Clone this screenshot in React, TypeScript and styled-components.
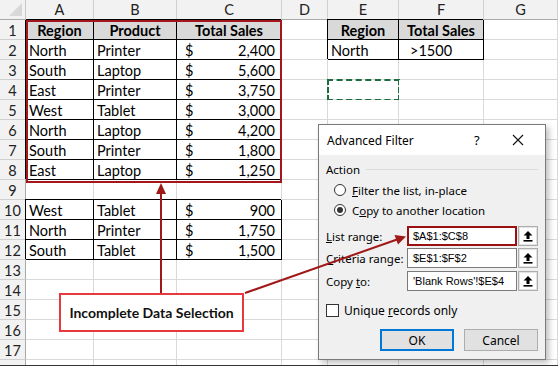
import React from "react";
import styled, { createGlobalStyle } from "styled-components";

const GlobalStyle = createGlobalStyle`
  html, body { margin: 0; padding: 0; background: #fff; }
  body { font-family: "Lato", "Open Sans", sans-serif; }
`;

// Column widths: row header, A..G
const COLS = [26, 68, 83, 105, 46, 71, 85, 74];
const LETTERS = ["A", "B", "C", "D", "E", "F", "G"];

type CellData = {
  text?: string;
  money?: string;
  bold?: boolean;
  head?: boolean;
  boxed?: boolean;
  center?: boolean;
  indent?: number;
  marching?: boolean;
};

const h = (text: string): CellData => ({ text, bold: true, head: true, boxed: true, center: true });
const t = (text: string): CellData => ({ text, boxed: true });
const m = (money: string): CellData => ({ money, boxed: true });

const DATA: CellData[][] = [
  [h("Region"), h("Product"), h("Total Sales"), {}, h("Region"), h("Total Sales"), {}],
  [t("North"), t("Printer"), m("2,400"), {}, t("North"), { text: ">1500", boxed: true, indent: 8 }, {}],
  [t("South"), t("Laptop"), m("5,600"), {}, {}, {}, {}],
  [t("East"), t("Printer"), m("3,750"), {}, { marching: true }, {}, {}],
  [t("West"), t("Tablet"), m("3,000"), {}, {}, {}, {}],
  [t("North"), t("Laptop"), m("4,200"), {}, {}, {}, {}],
  [t("South"), t("Printer"), m("1,800"), {}, {}, {}, {}],
  [t("East"), t("Laptop"), m("1,250"), {}, {}, {}, {}],
  [{}, {}, {}, {}, {}, {}, {}],
  [t("West"), t("Tablet"), m("900"), {}, {}, {}, {}],
  [t("North"), t("Printer"), m("1,750"), {}, {}, {}, {}],
  [t("South"), t("Tablet"), m("1,500"), {}, {}, {}, {}],
];

const NUMBERED_ROWS = 17;

const Page = styled.div`
  position: relative;
  width: 558px;
  height: 366px;
  overflow: hidden;
  background: #fff;
  box-sizing: border-box;
  border-bottom: 1px solid #333;
`;

const Sheet = styled.div`
  display: grid;
  grid-template-columns: ${COLS.map((c) => `${c}px`).join(" ")};
  grid-auto-rows: 20px;
  font-size: 14.5px;
  color: #000;
`;

const Corner = styled.div`
  position: relative;
  background: #f2f2f2;
  border-right: 1px solid #c6c6c6;
  border-bottom: 1px solid #a9a9a9;
  &::after {
    content: "";
    position: absolute;
    right: 3px;
    bottom: 3px;
    width: 0;
    height: 0;
    border-left: 13px solid transparent;
    border-bottom: 13px solid #d8d8d8;
  }
`;

const ColHead = styled.div`
  display: flex;
  align-items: center;
  justify-content: center;
  background: #f2f2f2;
  color: #222;
  border-right: 1px solid #d0d0d0;
  border-bottom: 1px solid #a9a9a9;
`;

const RowHead = styled.div`
  display: flex;
  align-items: center;
  justify-content: center;
  padding-top: 1px;
  background: #f2f2f2;
  color: #222;
  border-right: 1px solid #a9a9a9;
  border-bottom: 1px solid #d0d0d0;
`;

const Cell = styled.div<{ $boxed?: boolean; $head?: boolean; $center?: boolean; $indent?: number; $marching?: boolean }>`
  display: flex;
  align-items: center;
  justify-content: ${(p) => (p.$center ? "center" : "flex-start")};
  padding: 1px 3px 0 ${(p) => 3 + (p.$indent || 0)}px;
  white-space: nowrap;
  overflow: hidden;
  background: ${(p) => (p.$head ? "#d9d9d9" : "#fff")};
  font-weight: ${(p) => (p.$head ? 700 : 400)};
  border-right: 1px solid ${(p) => (p.$boxed ? "#000" : "#d9d9d9")};
  border-bottom: 1px solid ${(p) => (p.$boxed ? "#000" : "#d9d9d9")};
  box-shadow: ${(p) => (p.$boxed ? "-1px -1px 0 #000" : "none")};
  outline: ${(p) => (p.$marching ? "2px dashed #1b6b3c" : "none")};
  outline-offset: -1px;
`;

const Money = styled.span`
  display: flex;
  justify-content: space-between;
  width: 100%;
  padding: 0 3px 0 5px;
`;

const Selection = styled.div`
  position: absolute;
  left: 26px;
  top: 20px;
  width: 256px;
  height: 163px;
  box-sizing: border-box;
  border: 2px solid #a5161c;
  pointer-events: none;
`;

const Callout = styled.div`
  position: absolute;
  left: 59px;
  top: 293px;
  width: 185px;
  height: 39px;
  box-sizing: border-box;
  border: 2px solid #e8393f;
  background: #fff;
  display: flex;
  align-items: center;
  justify-content: center;
  font-weight: 700;
  font-size: 14px;
  color: #111;
`;

const Dialog = styled.div`
  position: absolute;
  left: 318px;
  top: 124px;
  width: 228px;
  height: 236px;
  box-sizing: border-box;
  border: 1px solid #7a7a7a;
  background: #f0f0f0;
  box-shadow: 3px 3px 6px rgba(0, 0, 0, 0.25);
  font-family: "Noto Sans", "Open Sans", sans-serif;
  font-size: 11.5px;
  color: #000;
  display: flex;
  flex-direction: column;
`;

const TitleBar = styled.div`
  height: 30px;
  background: #fff;
  display: flex;
  align-items: center;
  padding-left: 8px;
  font-size: 12px;
`;

const TitleText = styled.span`
  flex: 1;
`;

const HelpMark = styled.span`
  width: 14px;
  margin-right: 24px;
  font-size: 13px;
`;

const CloseBtn = styled.span`
  width: 12px;
  height: 12px;
  margin-right: 21px;
  display: flex;
`;

const Body = styled.div`
  padding: 0 7px;
  display: flex;
  flex-direction: column;
`;

const GroupTitle = styled.div`
  margin-top: 7px;
  height: 14px;
  display: flex;
  align-items: center;
  gap: 6px;
  &::after {
    content: "";
    flex: 1;
    height: 1px;
    background: #dcdcdc;
    margin-top: 1px;
  }
`;

const OptionRow = styled.div<{ $top: number }>`
  margin-top: ${(p) => p.$top}px;
  margin-left: 8px;
  height: 16px;
  display: flex;
  align-items: center;
  gap: 6px;
`;

const Radio = styled.span<{ $on?: boolean }>`
  width: 12px;
  height: 12px;
  box-sizing: border-box;
  border-radius: 50%;
  border: 1px solid #333;
  background: #fff;
  display: flex;
  align-items: center;
  justify-content: center;
  &::after {
    content: "";
    width: 6px;
    height: 6px;
    border-radius: 50%;
    background: ${(p) => (p.$on ? "#333" : "transparent")};
  }
`;

const FieldRow = styled.div<{ $top: number }>`
  margin-top: ${(p) => p.$top}px;
  height: 20px;
  display: flex;
  align-items: center;
`;

const FieldLabel = styled.span`
  width: 81px;
`;

const FieldInput = styled.div<{ $hot?: boolean }>`
  width: 110px;
  height: 20px;
  box-sizing: border-box;
  border: ${(p) => (p.$hot ? "2px solid #9b1111" : "1px solid #7a7a7a")};
  background: #fff;
  display: flex;
  align-items: center;
  padding-left: ${(p) => (p.$hot ? 4 : 5)}px;
  font-family: "Liberation Sans", Arial, sans-serif;
  font-size: 11px;
  white-space: nowrap;
  overflow: hidden;
`;

const PickBtn = styled.div`
  width: 20px;
  height: 20px;
  margin-left: 1px;
  box-sizing: border-box;
  border: 1px solid #adadad;
  box-shadow: inset 0 0 0 1px #e3e3e3;
  background: #fff;
  display: flex;
  align-items: center;
  justify-content: center;
`;

const CheckRow = styled.div`
  margin-top: 12px;
  height: 14px;
  display: flex;
  align-items: center;
  gap: 5px;
  font-size: 12px;
`;

const CheckBox = styled.span`
  width: 13px;
  height: 13px;
  box-sizing: border-box;
  border: 1px solid #333;
  background: #fff;
`;

const ButtonRow = styled.div`
  margin-top: 12px;
  display: flex;
  justify-content: flex-end;
  gap: 10px;
`;

const Button = styled.div<{ $primary?: boolean }>`
  width: 74px;
  height: 22px;
  box-sizing: border-box;
  border: ${(p) => (p.$primary ? "2px solid #0078d7" : "1px solid #adadad")};
  background: #e1e1e1;
  display: flex;
  align-items: center;
  justify-content: center;
  font-size: 12px;
`;

const Arrows = styled.svg`
  position: absolute;
  left: 0;
  top: 0;
  pointer-events: none;
`;

const UpArrow = () => (
  <svg width="10" height="11" viewBox="0 0 10 11">
    <path d="M5 0 L9.5 4.5 L6.5 4.5 L6.5 8 L3.5 8 L3.5 4.5 L0.5 4.5 Z" fill="#000" />
    <rect x="0.5" y="9" width="9" height="1.6" fill="#000" />
  </svg>
);

const CloseIcon = () => (
  <svg width="12" height="12" viewBox="0 0 12 12">
    <path d="M1 1 L11 11 M11 1 L1 11" stroke="#111" strokeWidth="1.1" />
  </svg>
);

const renderCell = (c: CellData, key: string) => (
  <Cell key={key} $boxed={c.boxed} $head={c.head} $center={c.center} $indent={c.indent} $marching={c.marching}>
    {c.money ? (
      <Money>
        <span>$</span>
        <span>{c.money}</span>
      </Money>
    ) : (
      c.text
    )}
  </Cell>
);

export default function App() {
  const blank: CellData[] = [{}, {}, {}, {}, {}, {}, {}];
  const rows = Array.from({ length: NUMBERED_ROWS + 1 }, (_, i) => DATA[i] || blank);

  return (
    <>
      <GlobalStyle />
      <Page>
        <Sheet>
          <Corner />
          {LETTERS.map((l) => (
            <ColHead key={l}>{l}</ColHead>
          ))}
          {rows.map((row, r) => (
            <React.Fragment key={r}>
              <RowHead>{r < NUMBERED_ROWS ? r + 1 : ""}</RowHead>
              {row.map((c, ci) => renderCell(c, `${r}-${ci}`))}
            </React.Fragment>
          ))}
        </Sheet>

        <Selection />

        <Dialog>
          <TitleBar>
            <TitleText>Advanced Filter</TitleText>
            <HelpMark>?</HelpMark>
            <CloseBtn>
              <CloseIcon />
            </CloseBtn>
          </TitleBar>
          <Body>
            <GroupTitle>Action</GroupTitle>
            <OptionRow $top={6}>
              <Radio />
              <span>
                <u>F</u>ilter the list, in-place
              </span>
            </OptionRow>
            <OptionRow $top={4}>
              <Radio $on />
              <span>
                C<u>o</u>py to another location
              </span>
            </OptionRow>
            <FieldRow $top={8}>
              <FieldLabel>
                <u>L</u>ist range:
              </FieldLabel>
              <FieldInput $hot>$A$1:$C$8</FieldInput>
              <PickBtn>
                <UpArrow />
              </PickBtn>
            </FieldRow>
            <FieldRow $top={2}>
              <FieldLabel>
                <u>C</u>riteria range:
              </FieldLabel>
              <FieldInput>$E$1:$F$2</FieldInput>
              <PickBtn>
                <UpArrow />
              </PickBtn>
            </FieldRow>
            <FieldRow $top={3}>
              <FieldLabel>
                Copy <u>t</u>o:
              </FieldLabel>
              <FieldInput>'Blank Rows'!$E$4</FieldInput>
              <PickBtn>
                <UpArrow />
              </PickBtn>
            </FieldRow>
            <CheckRow>
              <CheckBox />
              <span>
                Unique <u>r</u>ecords only
              </span>
            </CheckRow>
            <ButtonRow>
              <Button $primary>OK</Button>
              <Button>Cancel</Button>
            </ButtonRow>
          </Body>
        </Dialog>

        <Callout>Incomplete Data Selection</Callout>

        <Arrows width="558" height="366" viewBox="0 0 558 366">
          <line x1="161" y1="293" x2="161" y2="192" stroke="#a01818" strokeWidth="2" />
          <path d="M161 183 L156 194 L166 194 Z" fill="#a01818" />
          <line x1="245" y1="293" x2="397" y2="239.5" stroke="#a01818" strokeWidth="2" />
          <path d="M406 236.5 L394.5 235 L398 244.5 Z" fill="#a01818" />
        </Arrows>
      </Page>
    </>
  );
}
